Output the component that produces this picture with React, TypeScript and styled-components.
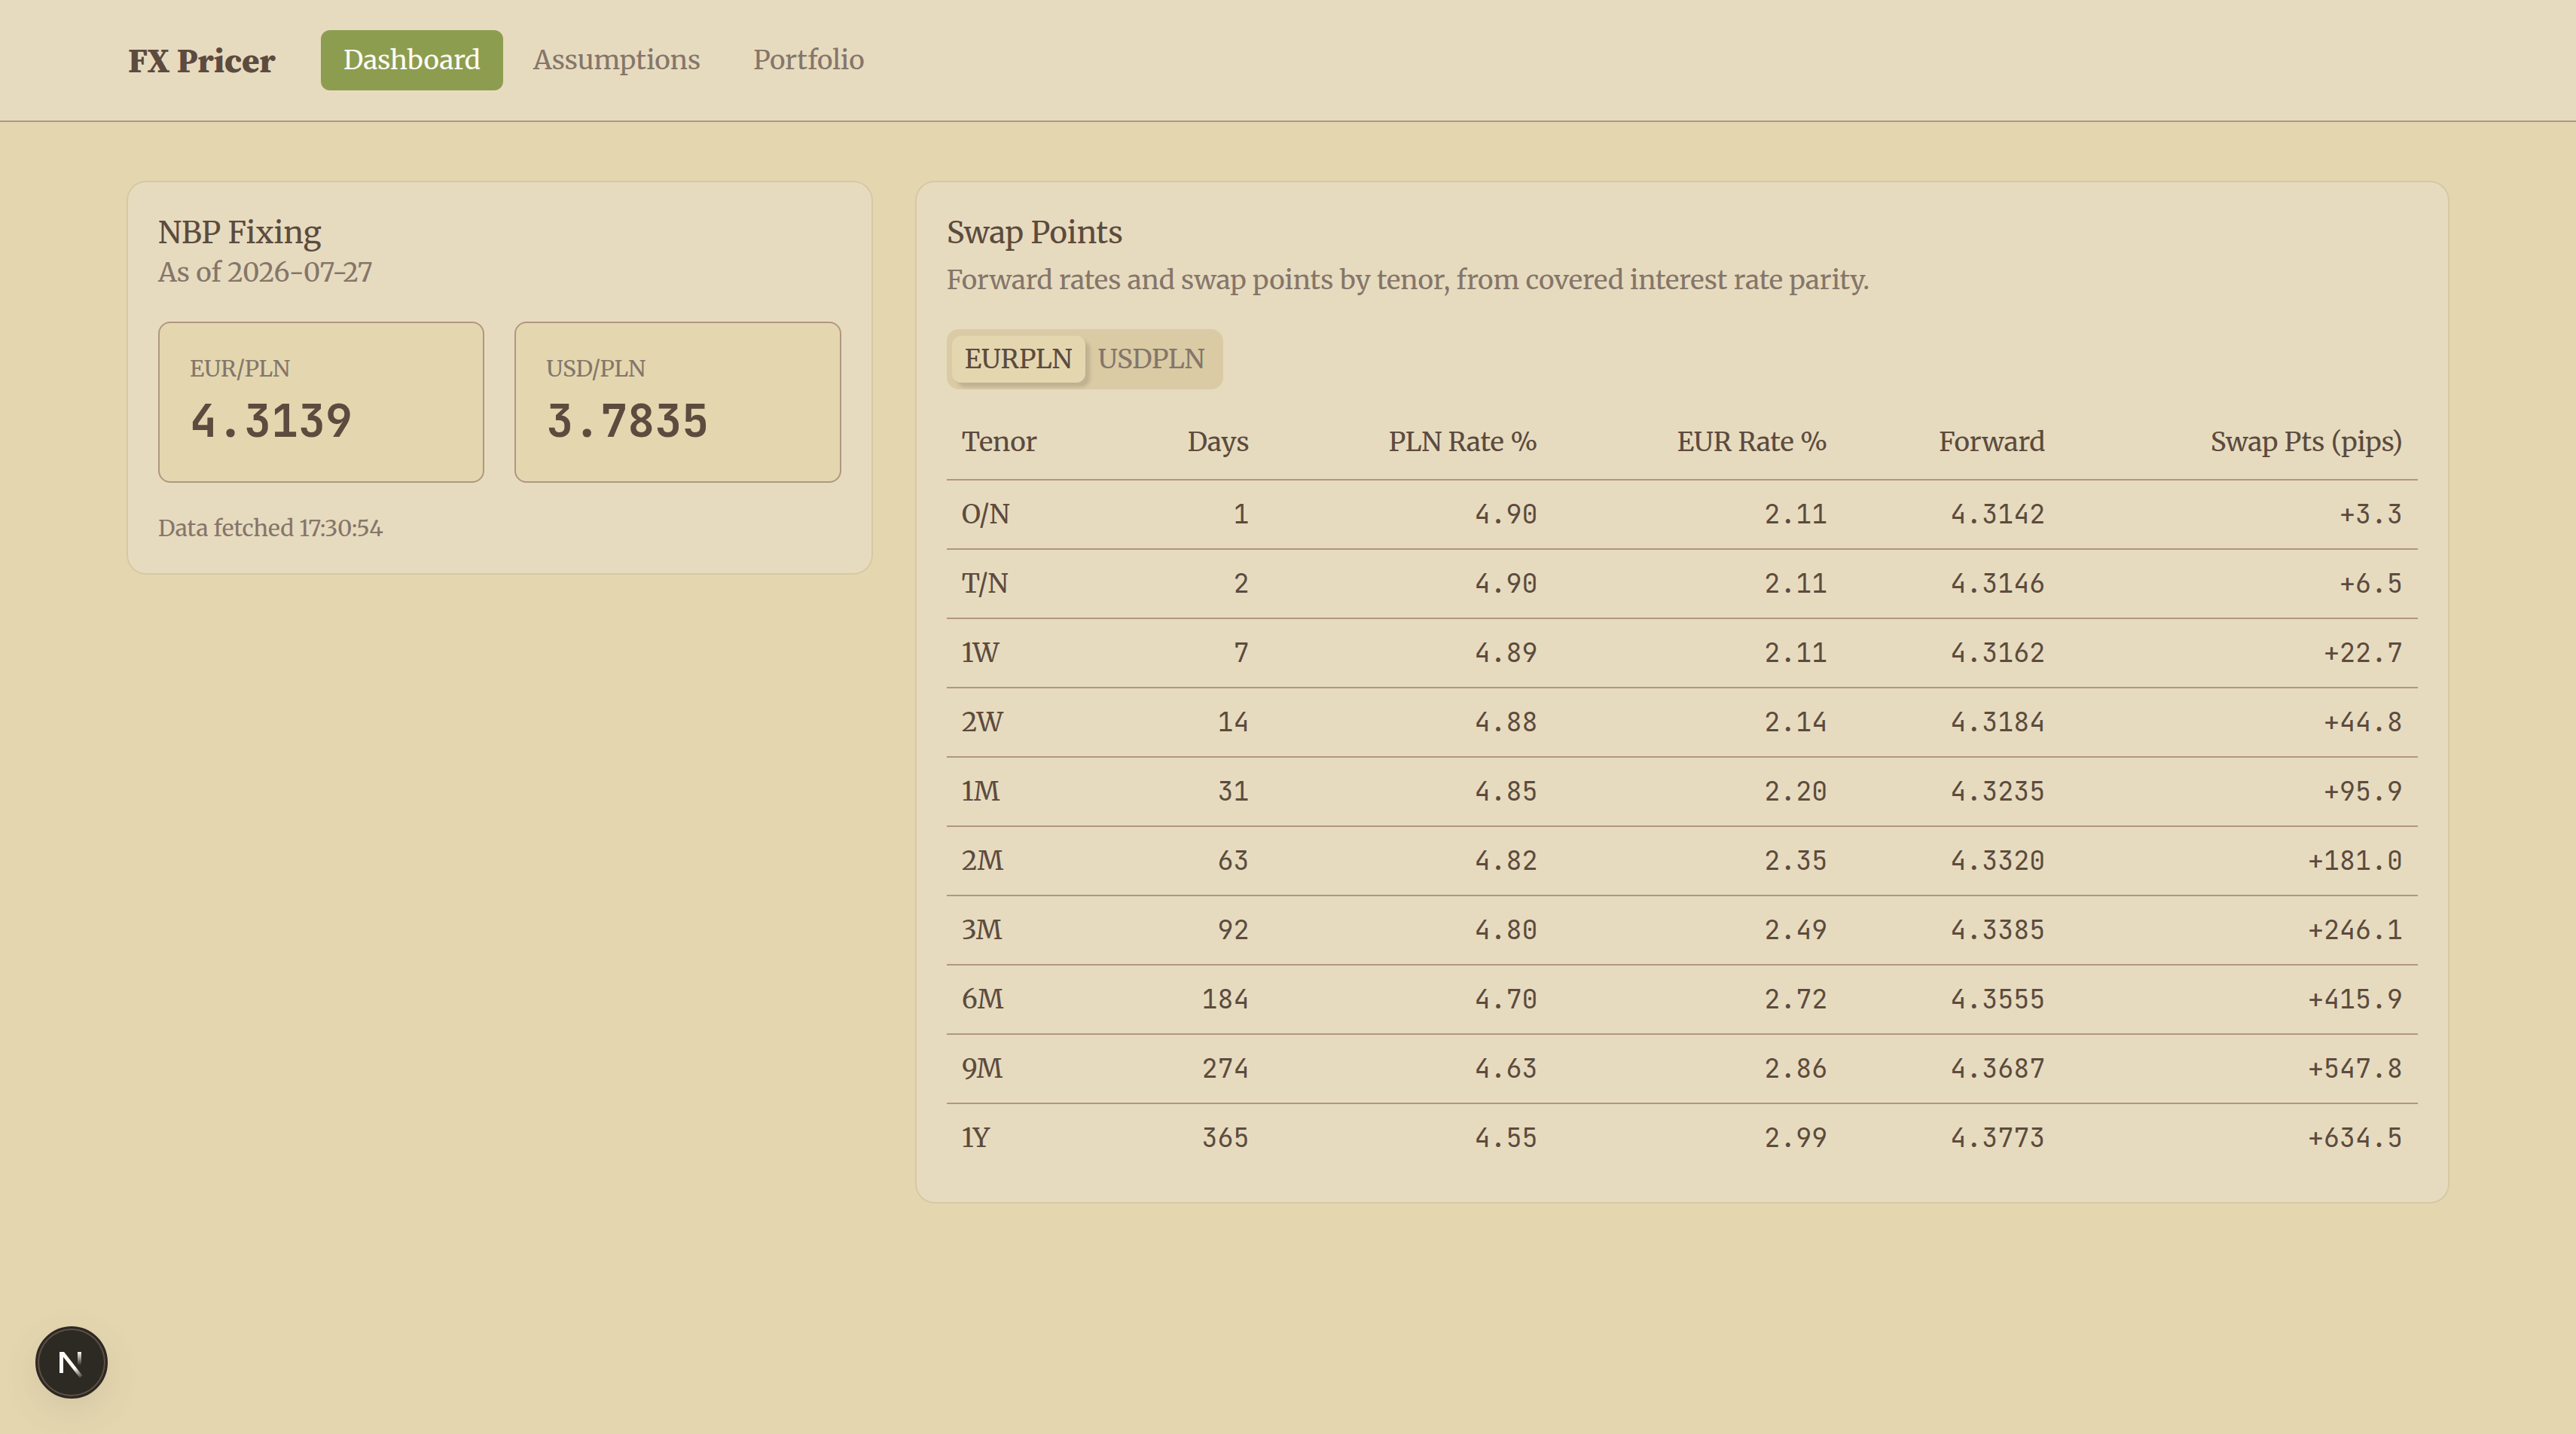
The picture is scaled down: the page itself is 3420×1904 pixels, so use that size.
import { useState } from "react";
import styled, { createGlobalStyle, ThemeProvider } from "styled-components";

const theme = {
  background: "#e4d7b0",
  foreground: "#5c4b3e",
  card: "#e7dbbf",
  primary: "#8d9d4f",
  primaryForeground: "#fdfbf6",
  muted: "#dacba5",
  mutedForeground: "#85766a",
  border: "#b19681",
  ring: "rgba(92, 75, 62, 0.1)",
  heading: '"Source Serif 4", "Source Serif Pro", Merriweather, "Liberation Serif", serif',
  serif: 'Merriweather, "Liberation Serif", serif',
  mono: '"JetBrains Mono", "DejaVu Sans Mono", monospace',
};

const GlobalStyle = createGlobalStyle`
  *, *::before, *::after { box-sizing: border-box; }
  body {
    margin: 0;
    background: ${theme.background};
    color: ${theme.foreground};
    font-family: ${theme.serif};
    font-size: 35px;
    line-height: 50px;
  }
  h1, h2, p { margin: 0; font-weight: 400; }
  button { font: inherit; color: inherit; }
`;

const Header = styled.header`
  background: ${(p) => p.theme.card};
  border-bottom: 2px solid ${(p) => p.theme.border};
`;

const Container = styled.div`
  max-width: 3200px;
  margin: 0 auto;
  padding: 0 60px;
`;

const HeaderRow = styled(Container)`
  display: flex;
  align-items: center;
  gap: 60px;
  padding-top: 40px;
  padding-bottom: 40px;
`;

const Brand = styled.h1`
  && {
    font-family: ${(p) => p.theme.heading};
    font-size: 45px;
    font-weight: 800;
    line-height: 70px;
  }
`;

const Nav = styled.nav`
  display: flex;
  gap: 10px;
`;

const NavLink = styled.a<{ $active?: boolean }>`
  padding: 15px 30px;
  border-radius: 12px;
  text-decoration: none;
  color: ${(p) => (p.$active ? p.theme.primaryForeground : p.theme.mutedForeground)};
  background: ${(p) => (p.$active ? p.theme.primary : "transparent")};
`;

const Main = styled(Container).attrs({ as: "main" })`
  display: grid;
  grid-template-columns: repeat(3, minmax(0, 1fr));
  align-items: start;
  gap: 60px;
  padding-top: 80px;
  padding-bottom: 80px;
`;

const Card = styled.section<{ $span?: number }>`
  grid-column: span ${(p) => p.$span ?? 1};
  padding: 40px;
  border-radius: 24px;
  background: ${(p) => p.theme.card};
  box-shadow: 0 0 0 2px ${(p) => p.theme.ring};
`;

const CardHeader = styled.header<{ $gap?: number }>`
  display: grid;
  gap: ${(p) => p.$gap ?? 0}px;
  margin-bottom: 40px;
`;

const CardTitle = styled.h2`
  font-size: 40px;
  line-height: 55px;
`;

const Muted = styled.p`
  color: ${(p) => p.theme.mutedForeground};
`;

const Small = styled(Muted)`
  font-size: 30px;
  line-height: 40px;
`;

const Quotes = styled.div`
  display: grid;
  grid-template-columns: 1fr 1fr;
  gap: 40px;
  margin-bottom: 40px;
`;

const Quote = styled.div`
  display: grid;
  gap: 10px;
  padding: 40px;
  border: 2px solid ${(p) => p.theme.border};
  border-radius: 16px;
  background: ${(p) => p.theme.background};
`;

const QuoteValue = styled.p`
  && {
    font-family: ${(p) => p.theme.mono};
    font-size: 60px;
    font-weight: 700;
    line-height: 80px;
  }
`;

const TabList = styled.div`
  display: inline-flex;
  align-items: center;
  height: 80px;
  padding: 0 7px;
  margin-bottom: 20px;
  border-radius: 16px;
  background: ${(p) => p.theme.muted};
  vertical-align: top;
`;

const Tab = styled.button<{ $active: boolean }>`
  height: 62px;
  padding: 0 17px;
  border: 0;
  border-radius: 12px;
  line-height: 50px;
  color: ${(p) => (p.$active ? p.theme.foreground : p.theme.mutedForeground)};
  background: ${(p) => (p.$active ? p.theme.background : "transparent")};
  box-shadow: ${(p) => (p.$active ? "6px 6px 4px rgba(92, 75, 62, 0.2)" : "none")};
`;

const Table = styled.table`
  width: 100%;
  table-layout: fixed;
  border-collapse: separate;
  border-spacing: 0;
  text-align: right;
`;

const Col = styled.col<{ $width: number }>`
  width: ${(p) => p.$width}%;
`;

const HeadCell = styled.th`
  height: 101px;
  padding: 0 20px;
  border-bottom: 2px solid ${(p) => p.theme.border};
  font-weight: 400;
  white-space: nowrap;

  &:first-child { text-align: left; }
`;

const Row = styled.tr`
  > * { border-bottom: 2px solid ${(p) => p.theme.border}; }
  &:last-child > * { border-bottom: 0; }
`;

const TenorCell = styled.th`
  padding: 20px;
  font-weight: 400;
  text-align: left;
`;

const NumberCell = styled.td`
  padding: 20px;
  font-family: ${(p) => p.theme.mono};
`;

const DevBadge = styled.button`
  position: fixed;
  left: 47px;
  bottom: 47px;
  width: 96px;
  height: 96px;
  padding: 0;
  border: 3px solid #2d2923;
  border-radius: 50%;
  background: #2d2923;
  box-shadow: inset 0 0 0 2px #5f5045, 0 16px 48px rgba(92, 75, 62, 0.12);

  svg { display: block; width: 100%; height: 100%; }
`;

const columns = [
  { label: "Tenor", width: 11 },
  { label: "Days", width: 10.6 },
  { label: "PLN Rate %", width: 19.6 },
  { label: "EUR Rate %", width: 19.7 },
  { label: "Forward", width: 14.8 },
  { label: "Swap Pts (pips)", width: 24.3 },
];

const rows = [
  ["O/N", "1", "4.90", "2.11", "4.3142", "+3.3"],
  ["T/N", "2", "4.90", "2.11", "4.3146", "+6.5"],
  ["1W", "7", "4.89", "2.11", "4.3162", "+22.7"],
  ["2W", "14", "4.88", "2.14", "4.3184", "+44.8"],
  ["1M", "31", "4.85", "2.20", "4.3235", "+95.9"],
  ["2M", "63", "4.82", "2.35", "4.3320", "+181.0"],
  ["3M", "92", "4.80", "2.49", "4.3385", "+246.1"],
  ["6M", "184", "4.70", "2.72", "4.3555", "+415.9"],
  ["9M", "274", "4.63", "2.86", "4.3687", "+547.8"],
  ["1Y", "365", "4.55", "2.99", "4.3773", "+634.5"],
];

const quotes = [
  { pair: "EUR/PLN", value: "4.3139" },
  { pair: "USD/PLN", value: "3.7835" },
];

const pairs = ["EURPLN", "USDPLN"];

function NextMark() {
  return (
    <svg viewBox="0 0 90 90" aria-hidden="true">
      <defs>
        <linearGradient id="diagonal" gradientUnits="userSpaceOnUse" x1="49" y1="53" x2="58" y2="65">
          <stop offset="0" stopColor="#fdfbf6" />
          <stop offset="1" stopColor="#fdfbf6" stopOpacity="0.1" />
        </linearGradient>
        <linearGradient id="stem" gradientUnits="userSpaceOnUse" x1="0" y1="31" x2="0" y2="49">
          <stop offset="0" stopColor="#fdfbf6" />
          <stop offset="1" stopColor="#fdfbf6" stopOpacity="0" />
        </linearGradient>
      </defs>
      <path d="M29 31h6L59.500 62.500l-3.500 3L33 36.500z" fill="url(#diagonal)" />
      <rect x="29" y="31" width="5" height="28" fill="#fdfbf6" />
      <rect x="53" y="31" width="5" height="19" fill="url(#stem)" />
    </svg>
  );
}

export default function App() {
  const [pair, setPair] = useState(pairs[0]);

  return (
    <ThemeProvider theme={theme}>
      <GlobalStyle />
      <Header>
        <HeaderRow>
          <Brand>FX Pricer</Brand>
          <Nav aria-label="Main">
            <NavLink href="#dashboard" $active aria-current="page">Dashboard</NavLink>
            <NavLink href="#assumptions">Assumptions</NavLink>
            <NavLink href="#portfolio">Portfolio</NavLink>
          </Nav>
        </HeaderRow>
      </Header>
      <Main>
        <Card>
          <CardHeader>
            <CardTitle>NBP Fixing</CardTitle>
            <Muted>As of 2026-07-27</Muted>
          </CardHeader>
          <Quotes>
            {quotes.map((q) => (
              <Quote key={q.pair}>
                <Small>{q.pair}</Small>
                <QuoteValue>{q.value}</QuoteValue>
              </Quote>
            ))}
          </Quotes>
          <Small>Data fetched 17:30:54</Small>
        </Card>
        <Card $span={2}>
          <CardHeader $gap={10}>
            <CardTitle>Swap Points</CardTitle>
            <Muted>Forward rates and swap points by tenor, from covered interest rate parity.</Muted>
          </CardHeader>
          <TabList role="tablist" aria-label="Currency pair">
            {pairs.map((p) => (
              <Tab key={p} type="button" role="tab" aria-selected={p === pair} $active={p === pair} onClick={() => setPair(p)}>
                {p}
              </Tab>
            ))}
          </TabList>
          <Table>
            <colgroup>
              {columns.map((c) => (
                <Col key={c.label} $width={c.width} />
              ))}
            </colgroup>
            <thead>
              <tr>
                {columns.map((c) => (
                  <HeadCell key={c.label} scope="col">{c.label}</HeadCell>
                ))}
              </tr>
            </thead>
            <tbody>
              {rows.map(([tenor, ...values]) => (
                <Row key={tenor}>
                  <TenorCell scope="row">{tenor}</TenorCell>
                  {values.map((value, i) => (
                    <NumberCell key={columns[i + 1].label}>{value}</NumberCell>
                  ))}
                </Row>
              ))}
            </tbody>
          </Table>
        </Card>
      </Main>
      <DevBadge type="button" aria-label="Open developer tools">
        <NextMark />
      </DevBadge>
    </ThemeProvider>
  );
}
